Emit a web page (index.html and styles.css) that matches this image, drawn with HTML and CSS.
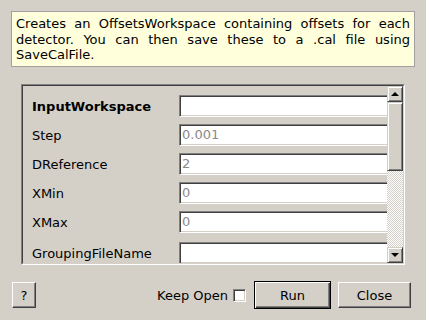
FILE: index.html
```html
<!DOCTYPE html>
<html>
<head>
  <title>GetDetectorOffsets</title>
  <link rel="stylesheet" href="styles.css">
</head>
<body>
  <div class="desc">Creates an OffsetsWorkspace containing offsets for each detector. You can then save these to a .cal file using SaveCalFile.</div>

  <div class="panel">
    <div class="panel-inner">
      <div class="viewport">
        <div class="props">
          <label class="bold">InputWorkspace</label>
          <div class="field"></div>
          <label>Step</label>
          <div class="field">0.001</div>
          <label>DReference</label>
          <div class="field">2</div>
          <label>XMin</label>
          <div class="field">0</div>
          <label>XMax</label>
          <div class="field">0</div>
          <label class="last">GroupingFileName</label>
          <div class="field last"></div>
        </div>
      </div>
      <div class="scrollbar">
        <div class="sb-btn"><span class="arrow-up"></span></div>
        <div class="sb-slider"></div>
        <div class="sb-track"></div>
        <div class="sb-btn"><span class="arrow-down"></span></div>
      </div>
    </div>
  </div>

  <div class="buttons">
    <div class="btn help">?</div>
    <div class="spacer"></div>
    <span class="keep">Keep Open</span>
    <span class="check"></span>
    <div class="btn run">Run</div>
    <div class="btn close">Close</div>
  </div>
</body>
</html>
```

FILE: styles.css
```css
body {
  margin: 0;
  background-color: #d4d0c8;
  font-family: "DejaVu Sans", sans-serif;
  font-size: 13px;
  color: #000;
}

.desc {
  margin: 11px 11px 0 11px;
  height: 56px;
  box-sizing: border-box;
  padding: 4px 4px 0 4px;
  background-color: #ffffdc;
  border: 1px solid #a0a0a0;
  line-height: 15.5px;
  text-align: justify;
}

.panel {
  margin: 17px 0 0 21px;
  width: 384px;
  height: 181px;
  box-sizing: border-box;
  border-top: 1px solid #808080;
  border-left: 1px solid #808080;
  border-bottom: 1px solid #fff;
  border-right: 1px solid #fff;
}

.panel-inner {
  display: flex;
  height: 100%;
  box-sizing: border-box;
  border-top: 1px solid #404040;
  border-left: 1px solid #404040;
  border-bottom: 1px solid #d4d0c8;
  border-right: 1px solid #d4d0c8;
}

.viewport {
  flex: 1;
  min-width: 0;
  overflow: hidden;
}

.props {
  display: grid;
  grid-template-columns: 147px 240px;
  row-gap: 7px;
  padding: 9px 0 0 9px;
}

.props label {
  display: flex;
  align-items: center;
  height: 22px;
}

.props .bold {
  font-weight: bold;
}

.props .last {
  margin-top: 2px;
}

.field {
  height: 22px;
  box-sizing: border-box;
  padding-left: 2px;
  background-color: #fff;
  color: #8a8a8a;
  line-height: 19px;
  border-top: 1px solid #808080;
  border-left: 1px solid #808080;
  border-bottom: 1px solid #fff;
  border-right: 1px solid #fff;
  box-shadow: inset 1px 1px 0 #404040, inset 0 -1px 0 #d4d0c8;
}

.scrollbar {
  width: 16px;
  flex-shrink: 0;
  display: flex;
  flex-direction: column;
}

.sb-btn,
.sb-slider {
  box-sizing: border-box;
  background-color: #d4d0c8;
  border-top: 1px solid #d4d0c8;
  border-left: 1px solid #d4d0c8;
  border-bottom: 1px solid #404040;
  border-right: 1px solid #404040;
  box-shadow: inset 1px 1px 0 #fff, inset -1px -1px 0 #808080;
}

.sb-btn {
  height: 16px;
  display: flex;
  align-items: center;
  justify-content: center;
}

.sb-slider {
  height: 69px;
}

.sb-track {
  flex: 1;
  background: repeating-conic-gradient(#fff 0 25%, #d4d0c8 0 50%) 0 0 / 2px 2px;
}

.arrow-up {
  width: 0;
  height: 0;
  border-left: 4px solid transparent;
  border-right: 4px solid transparent;
  border-bottom: 4px solid #000;
}

.arrow-down {
  width: 0;
  height: 0;
  border-left: 4px solid transparent;
  border-right: 4px solid transparent;
  border-top: 4px solid #000;
}

.buttons {
  display: flex;
  align-items: center;
  margin: 16px 15px 0 12px;
  height: 28px;
}

.spacer {
  flex: 1;
}

.btn {
  box-sizing: border-box;
  height: 26px;
  display: flex;
  align-items: center;
  justify-content: center;
  background-color: #d4d0c8;
  border-top: 1px solid #fff;
  border-left: 1px solid #fff;
  border-bottom: 1px solid #404040;
  border-right: 1px solid #404040;
  box-shadow: inset -1px -1px 0 #808080;
}

.help {
  width: 24px;
}

.keep {
  margin-right: 5px;
}

.check {
  width: 13px;
  height: 13px;
  box-sizing: border-box;
  background-color: #fff;
  border-top: 1px solid #808080;
  border-left: 1px solid #808080;
  border-bottom: 1px solid #fff;
  border-right: 1px solid #fff;
  box-shadow: inset 1px 1px 0 #404040, inset -1px -1px 0 #d4d0c8;
  margin-right: 8px;
}

.run {
  width: 77px;
  height: 28px;
  border: 1px solid #000;
  box-shadow: inset 1px 1px 0 #fff, inset -1px -1px 0 #404040, inset -2px -2px 0 #808080;
}

.close {
  width: 73px;
  margin-left: 7px;
}
```
